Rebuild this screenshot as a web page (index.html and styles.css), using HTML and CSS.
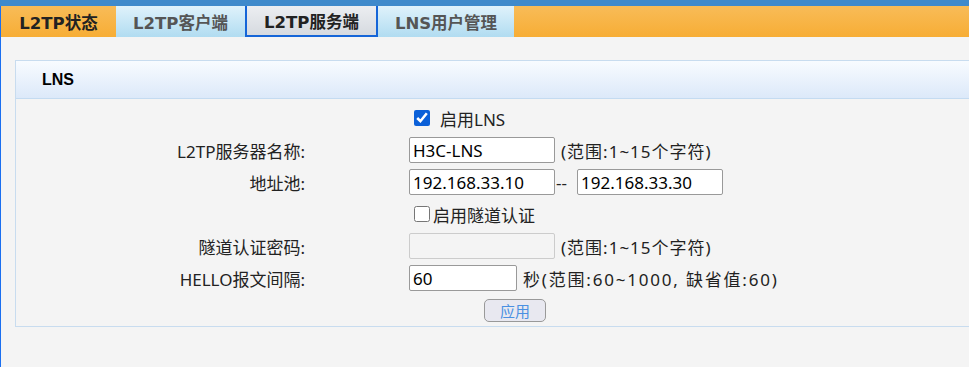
FILE: index.html
```html
<!DOCTYPE html>
<html lang="zh-CN">
<head>
    <meta charset="UTF-8">
    <meta name="viewport" content="width=device-width, initial-scale=1.0">
    <title>L2TP服务端</title>
    <link rel="stylesheet" href="styles.css">
</head>
<body>
    <div class="topbar"></div>
    <div class="page">
        <ul class="tabs">
            <li class="tab tab-status">L2TP状态</li>
            <li class="tab tab-client">L2TP客户端</li>
            <li class="tab tab-server active">L2TP服务端</li>
            <li class="tab tab-users">LNS用户管理</li>
        </ul>

        <div class="panel">
            <div class="panel-head">LNS</div>
            <form class="panel-body" id="lnsForm">
                <div class="row">
                    <span class="label"></span>
                    <label class="check on"><input type="checkbox" checked> <span>启用LNS</span></label>
                </div>
                <div class="row">
                    <span class="label">L2TP服务器名称:</span>
                    <div class="value">
                        <input class="field" type="text" value="H3C-LNS">
                        <span class="hint">(范围:1~15个字符)</span>
                    </div>
                </div>
                <div class="row">
                    <span class="label">地址池:</span>
                    <div class="value">
                        <input class="field" type="text" value="192.168.33.10">
                        <span class="dash">--</span>
                        <input class="field" type="text" value="192.168.33.30">
                    </div>
                </div>
                <div class="row">
                    <span class="label"></span>
                    <label class="check off"><input type="checkbox"><span>启用隧道认证</span></label>
                </div>
                <div class="row">
                    <span class="label">隧道认证密码:</span>
                    <div class="value">
                        <input class="field" type="password" disabled>
                        <span class="hint">(范围:1~15个字符)</span>
                    </div>
                </div>
                <div class="row">
                    <span class="label">HELLO报文间隔:</span>
                    <div class="value">
                        <input class="field short" type="text" value="60">
                        <span class="hint wide">秒(范围:60~1000, 缺省值:60)</span>
                    </div>
                </div>
                <div class="row">
                    <span class="label"></span>
                    <div class="value">
                        <button type="submit" class="apply">应用</button>
                    </div>
                </div>
            </form>
        </div>
    </div>
</body>
</html>
```

FILE: styles.css
```css
body { margin: 0; background: #f4f4f4; font-family: "Noto Sans", "Noto Sans CJK SC", sans-serif; font-size: 17px; color: #222; overflow: hidden; }
.topbar { height: 6px; background: #3f8acb; }
.page { border-left: 1px solid #1a6ff0; min-height: 361px; }

.tabs { display: flex; margin: 0; padding: 0; list-style: none; height: 31px; background: linear-gradient(#f8bc58, #f7ad35); }
.tab { display: flex; align-items: center; justify-content: center; font-family: "DejaVu Sans", "Noto Sans CJK SC", sans-serif; font-weight: bold; font-size: 16.5px; color: #555; box-sizing: border-box; }
.tab-status { width: 115px; color: #222; }
.tab-client { width: 129px; background: linear-gradient(#dff2fb, #b1dcf1); }
.tab-server { width: 133px; color: #222; background: linear-gradient(#eceef1, #d6dae0); border: 2px solid #1565d8; border-top: none; }
.tab-users { width: 136px; background: linear-gradient(#dff2fb, #b1dcf1); }

.panel { margin: 23px -20px 0 14px; border: 1px solid #c8dcef; }
.panel-head { height: 37px; padding-left: 26px; display: flex; align-items: center; font-family: "Liberation Sans", Arial, sans-serif; font-weight: bold; font-size: 16px; color: #000; background: linear-gradient(#f8fbff, #dce9f9); border-bottom: 1px solid #c4dbf1; }
.panel-body { padding-top: 3px; }

.row { display: grid; grid-template-columns: 289px 1fr; column-gap: 104px; height: 32px; align-items: center; }
.label { text-align: right; }
.value { display: flex; align-items: center; }

.field { width: 146px; height: 26px; box-sizing: border-box; border: 1px solid #999; border-radius: 2px; padding: 0 3px; font: inherit; color: #000; background: #fff; }
.field:disabled { background: #f4f4f4; border-color: #ccc; }
.field.short { width: 108px; }
.hint { margin-left: 6px; letter-spacing: 1px; }
.hint.wide { letter-spacing: 1.8px; }
.dash { width: 21px; padding-left: 1px; }

.check { display: flex; align-items: center; }
.check input { width: 16px; height: 16px; margin: 0; accent-color: #0b60d8; }
.check.on input { margin-left: 5px; margin-right: 10px; }
.check.off input { margin-left: 5px; margin-right: 3px; }

.apply { margin-left: 75px; width: 62px; height: 23px; border: 1px solid #999; border-radius: 5px; background: #e8e8f0; color: #4a90e2; font-family: inherit; font-size: 15px; padding: 0; }
```
